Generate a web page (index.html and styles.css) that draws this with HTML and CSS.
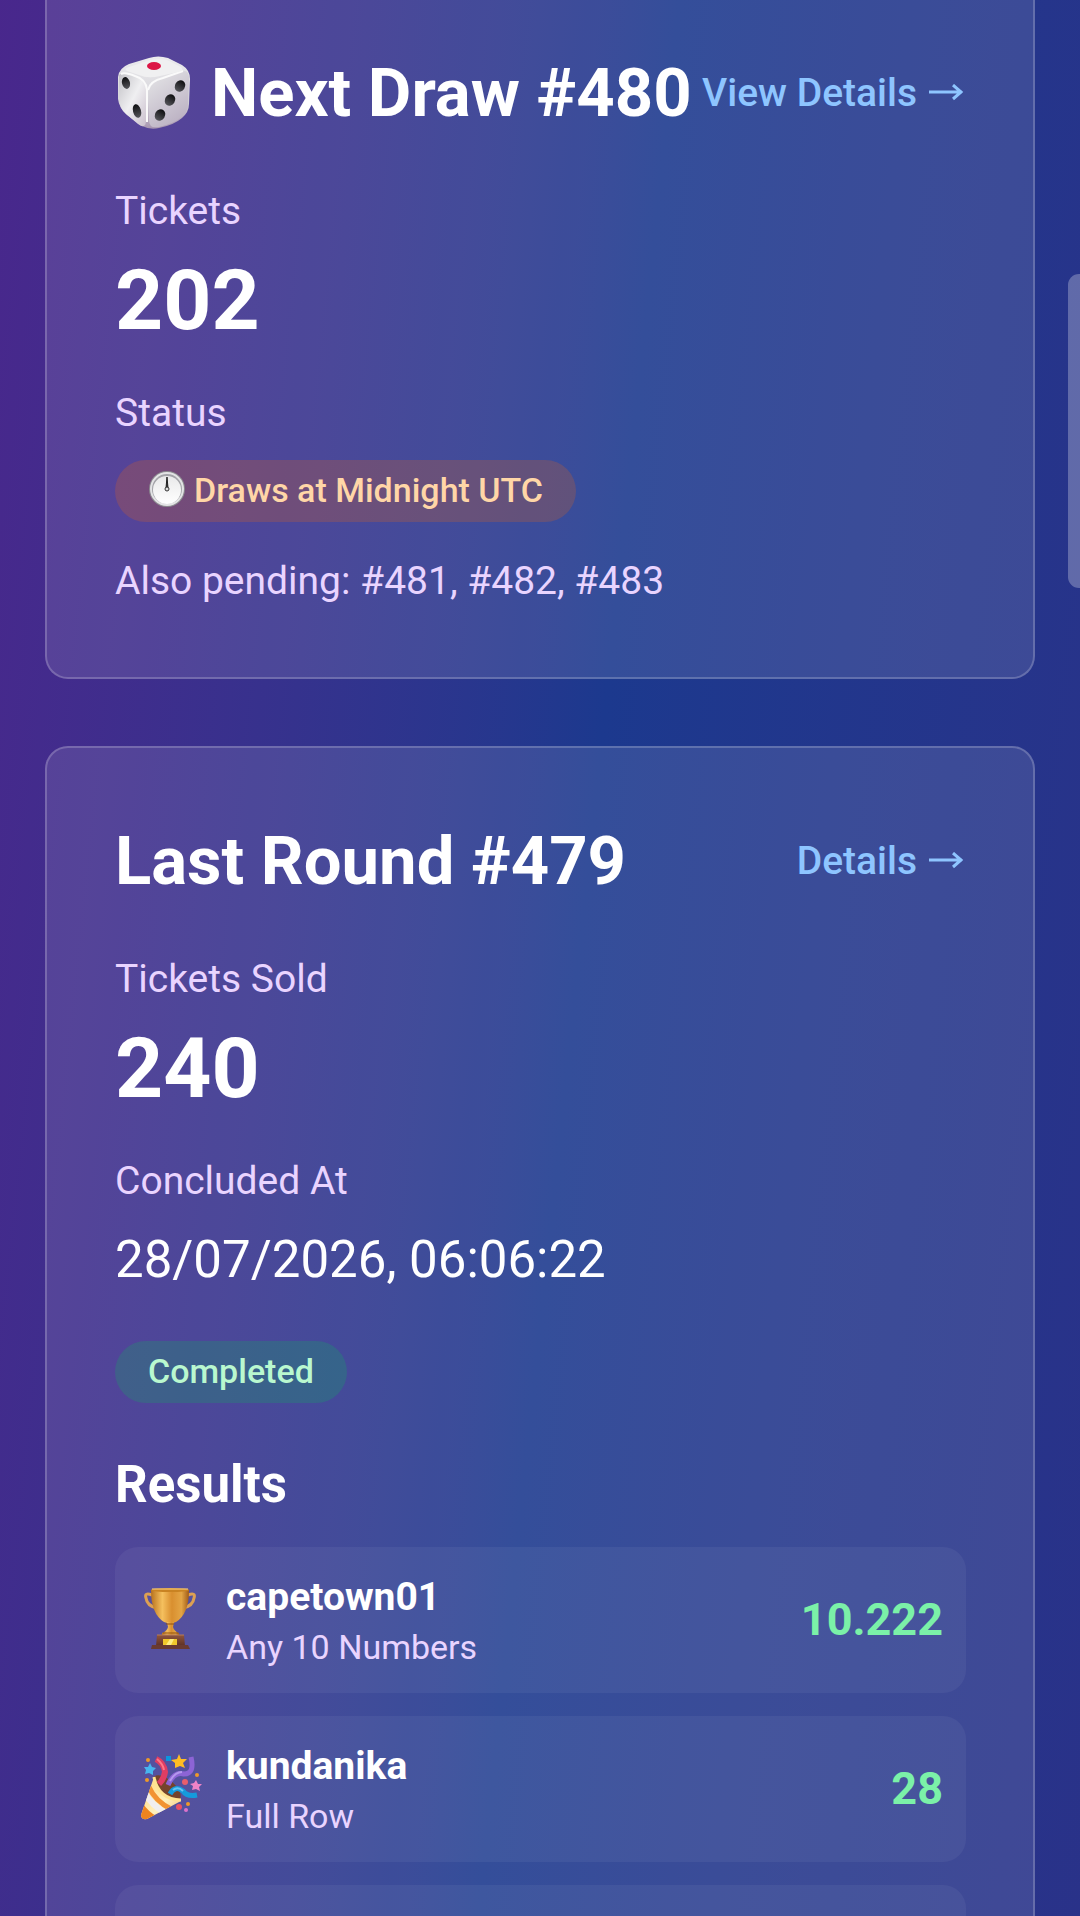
FILE: index.html
```html
<!DOCTYPE html>
<html lang="en">
<head>
  <meta charset="UTF-8">
  <meta name="viewport" content="width=device-width, initial-scale=1.0">
  <title>Draws</title>
  <link rel="stylesheet" href="styles.css">
</head>
<body>
  <main class="page">
    <section class="card">
      <div class="card-header">
        <h2 class="card-title">
          <svg class="title-icon" viewBox="0 0 81 78" aria-hidden="true">
            <defs>
              <linearGradient id="dice-body" x1="0" y1="0" x2="0" y2="1">
                <stop offset="0" stop-color="#ececee"/>
                <stop offset="0.6" stop-color="#d6d4da"/>
                <stop offset="1" stop-color="#a795b0"/>
              </linearGradient>
              <linearGradient id="dice-left" x1="0" y1="0" x2="1" y2="1">
                <stop offset="0" stop-color="#c2c1c6"/>
                <stop offset="0.5" stop-color="#efeff1"/>
                <stop offset="1" stop-color="#cabfcd"/>
              </linearGradient>
              <linearGradient id="dice-right" x1="0" y1="0" x2="0.5" y2="1">
                <stop offset="0" stop-color="#e6e7e8"/>
                <stop offset="1" stop-color="#bdb3c4"/>
              </linearGradient>
              <linearGradient id="dice-pip" x1="0" y1="0" x2="0" y2="1">
                <stop offset="0" stop-color="#0d0d0f"/>
                <stop offset="1" stop-color="#55555a"/>
              </linearGradient>
            </defs>
            <path d="M3 23Q4 14 14 10L34 4Q43 1 53 4L67 11Q75 16 75 25L74 50Q74 58 67 64Q59 71 44 74Q35 76 27 72L12 61Q4 54 3 45Z" fill="url(#dice-body)"/>
            <path d="M4 21Q8 17 20 22Q31 25 31 36V66Q31 76 23 70L11 60Q4 54 4 44Z" fill="url(#dice-left)"/>
            <path d="M34 38Q35 27 48 24L66 18Q74 14 74 25L73 50Q73 58 65 64Q58 70 44 73Q34 75 34 66Z" fill="url(#dice-right)"/>
            <path d="M6 20Q10 18 20 22Q31 25 32 36V68" fill="none" stroke="#fafafa" stroke-width="2"/>
            <path d="M33 36Q35 27 48 24L68 17" fill="none" stroke="#fafafa" stroke-width="2"/>
            <path d="M14 13L35 6Q44 4 52 6L66 13Q70 17 63 18L45 22Q33 25 24 21L12 17Q8 15 14 13Z" fill="#f0f0f1"/>
            <ellipse cx="39" cy="12" rx="7" ry="4" fill="#dc1545"/>
            <g fill="url(#dice-pip)">
              <ellipse cx="11" cy="29" rx="4" ry="6" transform="rotate(-15 11 29)"/>
              <ellipse cx="22" cy="57" rx="4" ry="7" transform="rotate(-15 22 57)"/>
              <ellipse cx="65" cy="32" rx="5" ry="6" transform="rotate(32 65 32)"/>
              <ellipse cx="55" cy="46" rx="5" ry="6" transform="rotate(32 55 46)"/>
              <ellipse cx="45" cy="61" rx="5" ry="6" transform="rotate(32 45 61)"/>
            </g>
          </svg>
          Next Draw #480
        </h2>
        <a class="card-link" href="#">
          View Details
          <svg class="arrow" viewBox="0 0 38 18" aria-hidden="true">
            <path d="M1 8H34M25 1L33 8L25 15"/>
          </svg>
        </a>
      </div>
      <p class="label">Tickets</p>
      <p class="number">202</p>
      <p class="label">Status</p>
      <p class="status">
        <span class="badge badge-pending">
          <svg class="badge-icon" viewBox="0 0 37 38" aria-hidden="true">
            <defs>
              <linearGradient id="clock-face" x1="0" y1="0" x2="0" y2="1">
                <stop offset="0" stop-color="#e9e9ea"/>
                <stop offset="1" stop-color="#fff"/>
              </linearGradient>
            </defs>
            <circle cx="19" cy="18" r="18" fill="#8c8b90"/>
            <circle cx="19" cy="18" r="17" fill="#e3e3e5"/>
            <circle cx="19" cy="18" r="15" fill="#a3a3a8"/>
            <circle cx="19" cy="19" r="14" fill="url(#clock-face)"/>
            <path d="M18 17L19 6L20 17Z" fill="#222" stroke="#222"/>
            <circle cx="19" cy="18" r="2" fill="#ddd" stroke="#333"/>
          </svg>
          Draws at Midnight UTC
        </span>
      </p>
      <p class="note">Also pending: #481, #482, #483</p>
    </section>

    <section class="card">
      <div class="card-header">
        <h2 class="card-title">Last Round #479</h2>
        <a class="card-link" href="#">
          Details
          <svg class="arrow" viewBox="0 0 38 18" aria-hidden="true">
            <path d="M1 8H34M25 1L33 8L25 15"/>
          </svg>
        </a>
      </div>
      <p class="label">Tickets Sold</p>
      <p class="number">240</p>
      <p class="label">Concluded At</p>
      <p class="date">28/07/2026, 06:06:22</p>
      <p class="state"><span class="badge badge-done">Completed</span></p>

      <h3 class="results-title">Results</h3>
      <ul class="results">
        <li class="result">
          <svg class="result-icon" viewBox="0 0 65 72" aria-hidden="true">
            <defs>
              <linearGradient id="cup" x1="0" y1="0" x2="1" y2="0">
                <stop offset="0" stop-color="#b8721e"/>
                <stop offset="0.3" stop-color="#f5c05e"/>
                <stop offset="0.55" stop-color="#d98f2f"/>
                <stop offset="0.8" stop-color="#e3a545"/>
                <stop offset="1" stop-color="#a05a16"/>
              </linearGradient>
              <linearGradient id="cup-base" x1="0" y1="0" x2="0" y2="1">
                <stop offset="0" stop-color="#8f563c"/>
                <stop offset="1" stop-color="#5d3026"/>
              </linearGradient>
            </defs>
            <path d="M14 12Q6 9 8 15Q9 23 19 25M50 12Q58 9 56 15Q55 23 45 25" fill="none" stroke="#dda052" stroke-width="3"/>
            <path d="M13 7H51Q51 31 38 39L35 40H29L26 39Q13 31 13 7Z" fill="url(#cup)"/>
            <ellipse cx="32" cy="7" rx="19" ry="2" fill="#c98322"/>
            <path d="M14 6H50" stroke="#ffd682"/>
            <path d="M29 39H36L35 44Q36 48 41 50V53H24V50Q29 48 30 44Z" fill="url(#cup)"/>
            <path d="M28 41H36M25 50H40" stroke="#905011" stroke-width="1"/>
            <path d="M19 52H46L47 63H18Z" fill="url(#cup-base)"/>
            <path d="M14 62H50L52 66H13Z" fill="#693a31"/>
            <path d="M19 52H46" stroke="#b77b59"/>
            <rect x="25" y="56" width="14" height="6" fill="#f1c82b"/>
            <path d="M28 62L32 56H36L33 62Z" fill="#ffed80"/>
          </svg>
          <div class="result-text">
            <p class="result-name">capetown01</p>
            <p class="result-type">Any 10 Numbers</p>
          </div>
          <span class="result-amount">10.222</span>
        </li>
        <li class="result">
          <svg class="result-icon" viewBox="0 0 65 72" aria-hidden="true">
            <defs>
              <linearGradient id="cone" x1="0" y1="0" x2="1" y2="1">
                <stop offset="0.2" stop-color="#ffd675"/>
                <stop offset="0.55" stop-color="#fff0bd"/>
                <stop offset="1" stop-color="#e09026"/>
              </linearGradient>
              <clipPath id="cone-shape">
                <path d="M16 25Q18 36 24 42Q31 49 43 49L9 67Q3 68 3 63Z"/>
              </clipPath>
            </defs>
            <ellipse cx="29" cy="36" rx="8" ry="17" fill="#75432b" transform="rotate(-48 29 36)"/>
            <g clip-path="url(#cone-shape)">
              <rect width="65" height="72" fill="url(#cone)"/>
              <path d="M11 35Q17 49 33 57" fill="none" stroke="#f29332" stroke-width="5"/>
              <path d="M7 41Q14 54 28 61" fill="none" stroke="#f1eeee" stroke-width="6"/>
              <path d="M4 50Q10 60 20 65L2 70Z" fill="#ed841f"/>
            </g>
            <path d="M16 25Q18 36 25 42Q32 48 43 48" fill="none" stroke="#ffe391" stroke-width="3"/>
            <path d="M18 7Q26 11 27 20Q26 27 21 32" fill="none" stroke="#df3d63" stroke-width="6"/>
            <path d="M19 7Q25 12 26 18" fill="none" stroke="#ff7888" stroke-width="2"/>
            <path d="M30 33Q36 19 46 22Q57 22 53 5" fill="none" stroke="#8c64d5" stroke-width="5"/>
            <path d="M32 29Q37 20 44 20" fill="none" stroke="#b597ed" stroke-width="2"/>
            <path d="M32 42Q37 33 45 39Q49 45 59 43" fill="none" stroke="#159bdc" stroke-width="5"/>
            <path d="M35 38Q40 34 45 39" fill="none" stroke="#65c5f3" stroke-width="2"/>
            <path d="M41 2L43 7L49 7L45 11L47 16L42 14L37 16L37 11L33 8L39 7Z" fill="#ffbd23"/>
            <path d="M12 11L14 15L18 16L15 19L15 23L11 21L7 22L8 18L6 15L10 15Z" fill="#47b5ef"/>
            <path d="M58 28L60 32L64 32L61 35L62 39L58 37L54 38L55 34L52 32L56 31Z" fill="#ef83c7"/>
            <rect x="28" y="4" width="5" height="5" fill="#0b96df"/>
            <g fill="#ef9927">
              <circle cx="10" cy="8" r="2"/>
              <circle cx="9" cy="28" r="2"/>
              <circle cx="59" cy="23" r="2"/>
              <circle cx="50" cy="52" r="2"/>
            </g>
            <circle cx="47" cy="30" r="3" fill="#e95e6c"/>
            <circle cx="41" cy="55" r="3" fill="#e65166"/>
            <circle cx="48" cy="58" r="2" fill="#dc72cd"/>
          </svg>
          <div class="result-text">
            <p class="result-name">kundanika</p>
            <p class="result-type">Full Row</p>
          </div>
          <span class="result-amount">28</span>
        </li>
        <li class="result"></li>
      </ul>
    </section>
  </main>
  <div class="scroll-thumb"></div>
</body>
</html>
```

FILE: styles.css
```css
* {
  box-sizing: border-box;
  margin: 0;
  padding: 0;
}

body {
  height: 100vh;
  overflow: hidden;
  font-family: Roboto, "Noto Sans", sans-serif;
  color: #fff;
  background: linear-gradient(96deg in oklab, #59168b -30%, #1c398e 53%, #312c85 138%);
}

/* scrolled a little past the top of the first card */
.page {
  display: flex;
  flex-direction: column;
  gap: 67px;
  padding: 0 45px;
  margin-top: -22px;
}

.card {
  padding: 68px 67px 68px 68px;
  border: 2px solid rgba(255, 255, 255, 0.2);
  border-radius: 23px;
  background-color: rgba(255, 255, 255, 0.11);
}

.card-header {
  display: flex;
  justify-content: space-between;
  align-items: center;
  margin-bottom: 45px;
  white-space: nowrap;
}

.card-title {
  display: flex;
  align-items: center;
  gap: 15px;
  font-size: 67px;
  line-height: 90px;
  font-weight: 700;
}

.title-icon {
  width: 81px;
  height: 78px;
}

.card-link {
  display: flex;
  align-items: center;
  gap: 11px;
  font-size: 39px;
  line-height: 56px;
  font-weight: 500;
  color: #8ec5ff;
  text-decoration: none;
}

.arrow {
  width: 38px;
  height: 18px;
  fill: none;
  stroke: currentColor;
  stroke-width: 3;
}

.label,
.note {
  font-size: 39px;
  line-height: 56px;
  color: #e9d4ff;
}

.number {
  margin: 11px 0 34px;
  font-size: 84px;
  line-height: 101px;
  font-weight: 700;
}

.date {
  margin-top: 11px;
  font-size: 51px;
  line-height: 79px;
}

.status {
  display: flex;
  margin: 19px 0 31px;
}

.state {
  display: flex;
  margin: 42px 0;
}

.badge {
  display: flex;
  align-items: center;
  gap: 9px;
  padding: 10px 33px 12px;
  border-radius: 31px;
  font-size: 34px;
  line-height: 40px;
  font-weight: 500;
}

.badge-pending {
  color: #ffd6a7;
  background-color: rgba(255, 105, 0, 0.2);
}

.badge-done {
  color: #b9f8cf;
  background-color: rgba(0, 201, 80, 0.2);
}

.badge-icon {
  width: 37px;
  height: 38px;
}

.results-title {
  margin-bottom: 23px;
  font-size: 51px;
  line-height: 79px;
  font-weight: 700;
}

.results {
  display: flex;
  flex-direction: column;
  gap: 23px;
  list-style: none;
}

.result {
  display: flex;
  align-items: center;
  gap: 23px;
  min-height: 146px;
  padding: 21px 23px 23px;
  border-radius: 23px;
  background-color: rgba(255, 255, 255, 0.05);
}

.result-icon {
  width: 65px;
  height: 72px;
}

.result-text {
  flex: 1;
}

.result-name {
  font-size: 39px;
  line-height: 56px;
  font-weight: 700;
}

.result-type {
  font-size: 34px;
  line-height: 45px;
  color: #e9d4ff;
}

.result-amount {
  font-size: 45px;
  line-height: 67px;
  font-weight: 700;
  color: #7bf1a8;
}

.scroll-thumb {
  position: fixed;
  top: 274px;
  right: 0;
  width: 12px;
  height: 314px;
  border-radius: 11px 0 0 11px;
  background-color: rgba(255, 255, 255, 0.27);
}
```
